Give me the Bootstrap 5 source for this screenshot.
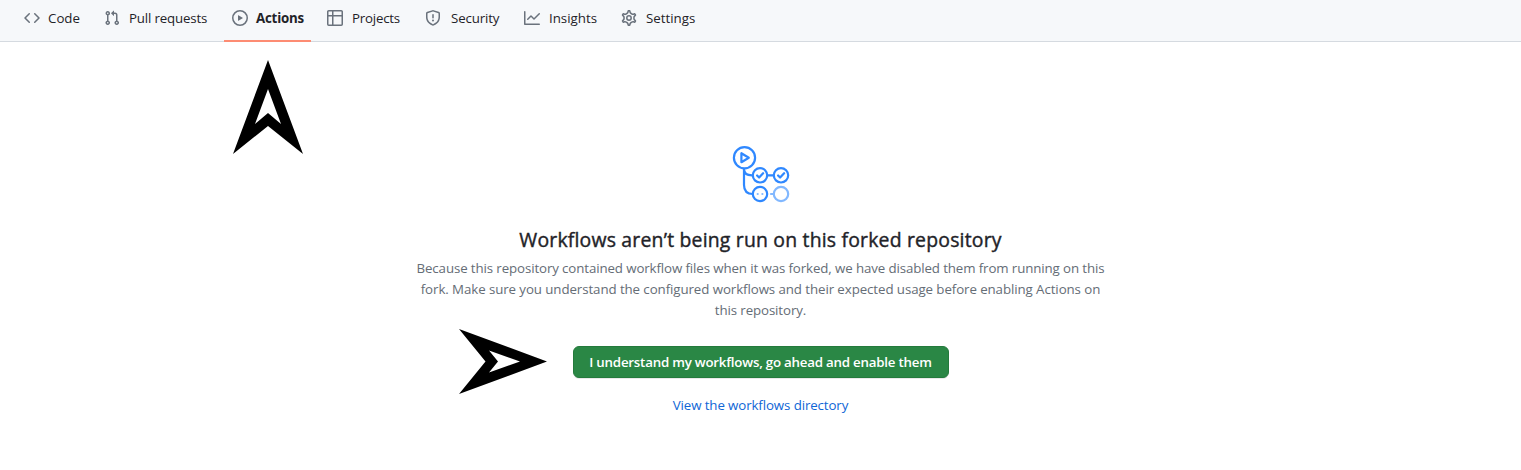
<!DOCTYPE html>
<html lang="en">
<head>
<meta charset="utf-8">
<meta name="viewport" content="width=device-width, initial-scale=1">
<title>Actions</title>
<link href="https://cdn.jsdelivr.net/npm/bootstrap@5.3.0/dist/css/bootstrap.min.css" rel="stylesheet">
<style>
body{font-family:"Open Sans","Noto Sans",sans-serif;font-size:13.3px;color:#1f2328;overflow:hidden}
.repo-tabs{height:42px;background:#f6f8fa;border-bottom:1px solid #d5dae0;padding-left:16px}
.repo-tabs .nav-link{height:42px;padding:0 0 5px 8px;gap:8px;color:#1f2328;border-bottom:2px solid transparent;white-space:nowrap;line-height:20px}
.repo-tabs .nav-link.active{border-color:#fd8c73;font-weight:700;letter-spacing:-.2px}
.repo-tabs svg{width:16px;height:16px;fill:#6a727c;flex:none}
.w-code{width:72px}.w-pull{width:120px}.w-act{width:87px}.w-proj{width:90px}.w-sec{width:91px}.w-ins{width:89px}.w-set{width:90px}
.t-pull,.t-proj,.t-sec,.t-ins,.t-set{margin-left:1px}
.t-pull{letter-spacing:-.17px}.t-proj{letter-spacing:-.22px}.t-sec{margin-left:2px;letter-spacing:-.15px}
.blank-slate{padding-top:104px}
.blank-slate h1{font-size:19.4px;font-weight:500;line-height:30px;margin:21px 0 3px;letter-spacing:.2px;-webkit-text-stroke:.4px #1f2328}
.blurb{color:#656d76;line-height:21px;margin-bottom:25px;white-space:nowrap;letter-spacing:-.112px}
.l2{letter-spacing:-.084px}
.btn-enable{width:376px;height:32px;background:#2a8745;border:1px solid #247a3c;border-radius:6px;color:#fff;font-size:13.3px;font-weight:600;padding:0;line-height:30px;white-space:nowrap;letter-spacing:-.215px;box-shadow:0 1px 0 rgba(31,35,40,.1)}
.btn-enable:hover{background:#2a8745;color:#fff}
.dir-link{color:#0f66d6;line-height:20px;margin-top:17px;letter-spacing:-.11px}
.pointer{position:absolute}
.p-up{left:233px;top:60px}
.p-right{left:459px;top:328px}
</style>
</head>
<body class="bg-white position-relative">
<nav class="repo-tabs">
<ul class="nav flex-nowrap gap-2">
<li><a class="nav-link d-flex align-items-center w-code" href="#"><svg viewBox="0 0 16 16"><path d="M4.72 3.22a.75.75 0 011.06 1.06L2.06 8l3.72 3.72a.75.75 0 11-1.06 1.06L.47 8.53a.75.75 0 010-1.06l4.25-4.25zm6.56 0a.75.75 0 10-1.06 1.06L13.94 8l-3.72 3.72a.75.75 0 101.06 1.06l4.25-4.25a.75.75 0 000-1.06l-4.25-4.25z"/></svg><span class="t-code">Code</span></a></li>
<li><a class="nav-link d-flex align-items-center w-pull" href="#"><svg viewBox="0 0 16 16"><path fill-rule="evenodd" d="M7.177 3.073L9.573.677A.25.25 0 0110 .854v4.792a.25.25 0 01-.427.177L7.177 3.427a.25.25 0 010-.354zM3.75 2.5a.75.75 0 100 1.5.75.75 0 000-1.5zm-2.25.75a2.25 2.25 0 113 2.122v5.256a2.251 2.251 0 11-1.5 0V5.372A2.25 2.25 0 011.5 3.25zM11 2.5h-1V4h1a1 1 0 011 1v5.628a2.251 2.251 0 101.5 0V5A2.5 2.5 0 0011 2.5zm1 10.25a.75.75 0 111.5 0 .75.75 0 01-1.5 0zM3.75 12a.75.75 0 100 1.5.75.75 0 000-1.5z"/></svg><span class="t-pull">Pull requests</span></a></li>
<li><a class="nav-link active d-flex align-items-center w-act" href="#"><svg viewBox="0 0 16 16"><path fill-rule="evenodd" d="M1.5 8a6.5 6.5 0 1113 0 6.5 6.5 0 01-13 0zM8 0a8 8 0 100 16A8 8 0 008 0zM6.379 5.227A.25.25 0 006 5.442v5.117a.25.25 0 00.379.214l4.264-2.559a.25.25 0 000-.428L6.379 5.227z"/></svg><span class="t-act">Actions</span></a></li>
<li><a class="nav-link d-flex align-items-center w-proj" href="#"><svg viewBox="0 0 16 16"><path fill-rule="evenodd" d="M0 1.75C0 .784.784 0 1.75 0h12.5C15.216 0 16 .784 16 1.75v12.5A1.75 1.75 0 0114.25 16H1.75A1.75 1.75 0 010 14.25V1.75zM1.5 6.5v7.75c0 .138.112.25.25.25H5v-8H1.5zM5 5H1.5V1.75a.25.25 0 01.25-.25H5V5zm1.5 1.5v8h7.75a.25.25 0 00.25-.25V6.5h-8zm8-1.5h-8V1.5h7.75a.25.25 0 01.25.25V5z"/></svg><span class="t-proj">Projects</span></a></li>
<li><a class="nav-link d-flex align-items-center w-sec" href="#"><svg viewBox="0 0 16 16"><path fill-rule="evenodd" d="M7.467.133a1.75 1.75 0 011.066 0l5.25 1.68A1.75 1.75 0 0115 3.48V7c0 1.566-.32 3.182-1.303 4.682-.983 1.498-2.585 2.813-5.032 3.855a1.7 1.7 0 01-1.33 0c-2.447-1.042-4.049-2.357-5.032-3.855C1.32 10.182 1 8.566 1 7V3.48a1.75 1.75 0 011.217-1.667l5.25-1.68zm.61 1.429a.25.25 0 00-.153 0l-5.25 1.68a.25.25 0 00-.174.238V7c0 1.358.275 2.666 1.057 3.86.784 1.194 2.121 2.34 4.366 3.297a.2.2 0 00.154 0c2.245-.956 3.582-2.104 4.366-3.298C13.225 9.666 13.5 8.36 13.5 7V3.48a.25.25 0 00-.174-.237l-5.25-1.68zM9 10.5a1 1 0 11-2 0 1 1 0 012 0zm-.25-5.75a.75.75 0 10-1.5 0v3a.75.75 0 001.5 0v-3z"/></svg><span class="t-sec">Security</span></a></li>
<li><a class="nav-link d-flex align-items-center w-ins" href="#"><svg viewBox="0 0 16 16"><path d="M1.5 1.75a.75.75 0 00-1.5 0v12.5c0 .414.336.75.75.75h14.5a.75.75 0 000-1.5H1.5V1.75zm14.28 2.53a.75.75 0 00-1.06-1.06L10 7.94 7.53 5.47a.75.75 0 00-1.06 0L3.22 8.72a.75.75 0 001.06 1.06L7 7.06l2.47 2.47a.75.75 0 001.06 0l5.25-5.25z"/></svg><span class="t-ins">Insights</span></a></li>
<li><a class="nav-link d-flex align-items-center w-set" href="#"><svg viewBox="0 0 16 16"><g fill="none" stroke="#6a727c" stroke-width="1.4"><path transform="translate(8 8) scale(1.1) translate(-8 -8)" d="M7.429 1.525a6.593 6.593 0 011.142 0c.036.003.108.036.137.146l.289 1.105c.147.56.55.967.997 1.189.174.086.341.183.501.29.417.278.97.423 1.53.27l1.102-.303c.11-.03.175.016.195.046.219.31.41.641.573.989.014.031.022.11-.059.19l-.815.806c-.411.406-.562.957-.53 1.456a4.588 4.588 0 010 .582c-.032.499.119 1.05.53 1.456l.815.806c.08.08.073.159.059.19a6.494 6.494 0 01-.573.99c-.02.029-.086.074-.195.045l-1.103-.303c-.559-.153-1.112-.008-1.529.27-.16.107-.327.204-.5.29-.449.222-.851.628-.998 1.189l-.289 1.105c-.029.11-.101.143-.137.146a6.613 6.613 0 01-1.142 0c-.036-.003-.108-.037-.137-.146l-.289-1.105c-.147-.56-.55-.967-.997-1.189a4.502 4.502 0 01-.501-.29c-.417-.278-.97-.423-1.53-.27l-1.102.303c-.11.03-.175-.016-.195-.046a6.492 6.492 0 01-.573-.989c-.014-.031-.022-.11.059-.19l.815-.806c.411-.406.562-.957.53-1.456a4.587 4.587 0 010-.582c.032-.499-.119-1.05-.53-1.456l-.815-.806c-.08-.08-.073-.159-.059-.19a6.44 6.44 0 01.573-.99c.02-.029.086-.075.195-.045l1.103.303c.559.153 1.112.008 1.529-.27.16-.107.327-.204.5-.29.449-.222.851-.628.998-1.189l.289-1.105c.029-.11.101-.143.137-.146z"/><circle cx="8" cy="8" r="2.2" stroke-width="1.5"/></g></svg><span class="t-set">Settings</span></a></li>
</ul>
</nav>
<main class="blank-slate d-flex flex-column align-items-center text-center">
<svg width="58" height="58" viewBox="0 0 58 58" fill="none" stroke="#2f88ff" stroke-width="2.2" stroke-linecap="round" stroke-linejoin="round">
<circle cx="12.5" cy="11.700" r="10.6"/><path d="M9.4 7.2v9l7.400-4.500z"/>
<path d="M12 23v16c0 6 3 9 9 9M12 23c0 4 3 6.300 8 6.300M35.500 29.300h5.500"/>
<circle cx="28" cy="29.300" r="7.200"/><circle cx="49" cy="29.300" r="7.200"/>
<path d="M25.100 29.500l2 2 4-4.300M46.100 29.500l2 2 4-4.300"/>
<circle cx="28" cy="48" r="7.200"/>
<g stroke="#82b8ff"><path d="M25.700 48h.01M30.400 48h.01M39 48h2"/><circle cx="49" cy="48" r="7.200"/></g>
</svg>
<h1><span class="t-head">Workflows aren’t being run on this forked repository</span></h1>
<p class="blurb"><span class="l1">Because this repository contained workflow files when it was forked, we have disabled them from running on this</span><br><span class="l2">fork. Make sure you understand the configured workflows and their expected usage before enabling Actions on</span><br><span class="l3">this repository.</span></p>
<button class="btn btn-enable" type="button"><span class="t-btn">I understand my workflows, go ahead and enable them</span></button>
<a class="dir-link text-decoration-none" href="#"><span class="t-dir">View the workflows directory</span></a>
</main>
<svg class="pointer p-up" width="70" height="95" viewBox="0 0 70 95"><path fill-rule="evenodd" d="M35 0L70 94 35 66 0 94zM35 29L22 64 35 53 48 64z"/></svg>
<svg class="pointer p-right" width="88" height="66" viewBox="0 0 88 66"><path fill-rule="evenodd" d="M88 33.500L0 66 26.500 33.500 0 1zM61 33.500L30 22.500 39 33.500 30 44.500z"/></svg>
<script src="https://cdn.jsdelivr.net/npm/bootstrap@5.3.0/dist/js/bootstrap.bundle.min.js"></script>
</body>
</html>
